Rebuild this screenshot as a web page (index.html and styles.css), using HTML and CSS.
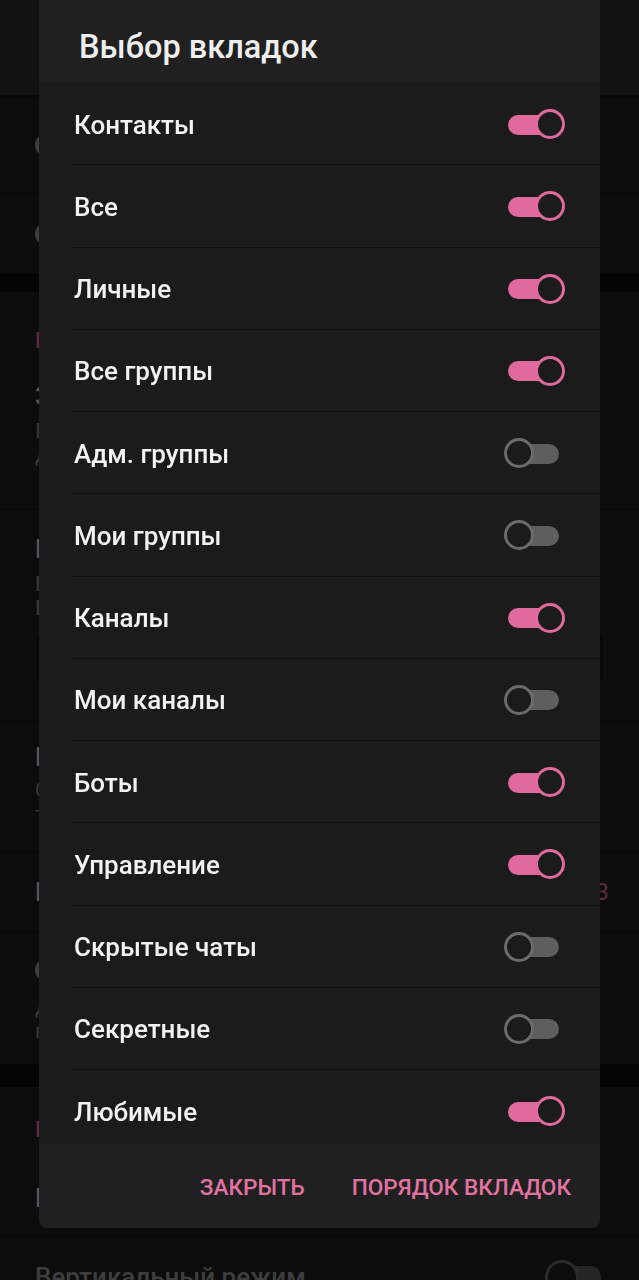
FILE: index.html
```html
<!DOCTYPE html>
<html lang="ru">
<head>
<meta charset="UTF-8">
<meta name="viewport" content="width=device-width, initial-scale=1.0">
<title>Выбор вкладок</title>
<link rel="stylesheet" href="styles.css">
</head>
<body>
<div class="page">
    <div class="toolbar"></div>
    <div class="row icon-row first"><span class="icon"></span><span class="label">Скрывать вкладки</span></div>
    <div class="row icon-row short"><span class="icon"></span><span class="label">Счётчик на вкладках</span></div>
    <div class="band"></div>
    <div class="section">
        <div class="section-title">Вкладки</div>
        <div class="row block-a">
            <div class="label">Значок на вкладках</div>
            <div class="sub">Показывать количество непрочитанных</div>
            <div class="sub">Для всех вкладок</div>
        </div>
        <div class="row block-b">
            <div class="label">Название вкладки</div>
            <div class="sub">Нажмите, чтобы изменить</div>
            <div class="sub">Если пусто, будет по умолчанию</div>
            <div class="field"></div>
        </div>
        <div class="row block-c">
            <div class="label">Иконки вкладок</div>
            <div class="sub">Скрыть названия и показывать</div>
            <div class="sub">только иконки</div>
        </div>
        <div class="row block-d">
            <div class="label">Высота вкладок</div>
            <div class="value">3</div>
        </div>
        <div class="row block-e">
            <span class="icon"></span>
            <div class="sub">Длинное нажатие</div>
            <div class="sub">по вкладке</div>
        </div>
    </div>
    <div class="band tall"></div>
    <div class="section">
        <div class="section-title low">Вид</div>
        <div class="row block-f"><div class="label">Нижнее меню</div></div>
        <div class="row block-g">
            <div class="label muted">Вертикальный режим</div>
            <span class="page-switch"></span>
        </div>
    </div>
</div>

<div class="scrim"></div>

<div class="dialog">
    <div class="dialog-title">Выбор вкладок</div>
    <ul class="tab-list">
        <li class="tab-item"><span>Контакты</span><span class="switch on"></span></li>
        <li class="tab-item"><span>Все</span><span class="switch on"></span></li>
        <li class="tab-item"><span>Личные</span><span class="switch on"></span></li>
        <li class="tab-item"><span>Все группы</span><span class="switch on"></span></li>
        <li class="tab-item"><span>Адм. группы</span><span class="switch"></span></li>
        <li class="tab-item"><span>Мои группы</span><span class="switch"></span></li>
        <li class="tab-item"><span>Каналы</span><span class="switch on"></span></li>
        <li class="tab-item"><span>Мои каналы</span><span class="switch"></span></li>
        <li class="tab-item"><span>Боты</span><span class="switch on"></span></li>
        <li class="tab-item"><span>Управление</span><span class="switch on"></span></li>
        <li class="tab-item"><span>Скрытые чаты</span><span class="switch"></span></li>
        <li class="tab-item"><span>Секретные</span><span class="switch"></span></li>
        <li class="tab-item"><span>Любимые</span><span class="switch on"></span></li>
    </ul>
    <div class="dialog-actions">
        <button class="action">Закрыть</button>
        <button class="action">Порядок вкладок</button>
    </div>
</div>
</body>
</html>
```

FILE: styles.css
```css
body {
    margin: 0;
    background: #1e1e1e;
    font-family: Roboto, "Noto Sans", sans-serif;
    overflow: hidden;
}

/* settings page behind the dialog */
.page {
    height: 1280px;
    overflow: hidden;
}
.toolbar {
    height: 95px;
    background: #2f2f2f;
    border-bottom: 2px solid #141414;
}
.row {
    box-sizing: border-box;
    padding-left: 35px;
    padding-right: 34px;
    border-bottom: 1px solid #121212;
    position: relative;
}
.icon-row {
    display: flex;
    align-items: center;
    gap: 30px;
}
.icon-row.first {
    height: 97px;
}
.icon-row.short {
    height: 80px;
}
.icon {
    display: block;
    width: 22px;
    height: 22px;
    border-radius: 50%;
    background: #9a9a9a;
}
.label {
    font-size: 26px;
    font-weight: 500;
    color: #dcdcdc;
}
.label.muted {
    color: #999;
}
.sub {
    font-size: 21px;
    line-height: 24px;
    color: #8c8c8c;
}
.band {
    height: 18px;
    background: #0c0c0c;
}
.band.tall {
    height: 23px;
}
.section-title {
    height: 75px;
    box-sizing: border-box;
    padding: 36px 35px 0;
    font-size: 22px;
    font-weight: 500;
    color: #e0699e;
}
.section-title.low {
    padding-top: 30px;
    height: 72px;
}
.block-a {
    height: 143px;
    padding-top: 14px;
}
.block-a .label {
    margin-bottom: 8px;
}
.block-b {
    height: 212px;
    padding-top: 24px;
}
.block-b .label {
    margin-bottom: 8px;
}
.field {
    height: 46px;
    margin-top: 14px;
    background: #141414;
    border: 1px solid #2a2a2a;
}
.block-c {
    height: 130px;
    padding-top: 20px;
}
.block-c .label {
    margin-bottom: 6px;
}
.block-d {
    height: 80px;
    display: flex;
    align-items: center;
    justify-content: space-between;
}
.value {
    font-size: 24px;
    color: #e0699e;
    margin-right: -4px;
}
.block-e {
    height: 132px;
    padding-top: 27px;
    border-bottom: none;
}
.block-e .icon {
    margin-bottom: 14px;
}
.block-f {
    height: 78px;
    display: flex;
    align-items: center;
}
.block-g {
    height: 80px;
    display: flex;
    align-items: center;
    justify-content: space-between;
    border-bottom: none;
}
.page-switch {
    position: relative;
    width: 50px;
    height: 22px;
    border-radius: 11px;
    background: #5e5e5e;
    margin-right: 4px;
}
.page-switch::after {
    content: "";
    position: absolute;
    top: -6px;
    left: -6px;
    width: 28px;
    height: 28px;
    border-radius: 50%;
    border: 3px solid #6b6b6b;
    background: #1e1e1e;
}

.scrim {
    position: fixed;
    inset: 0;
    background: rgba(0, 0, 0, 0.6);
}

/* dialog */
.dialog {
    position: fixed;
    top: 0;
    left: 39px;
    width: 561px;
    height: 1228px;
    display: flex;
    flex-direction: column;
    background: #1b1b1b;
    border-radius: 0 0 8px 8px;
    overflow: hidden;
}
.dialog-title {
    height: 83px;
    box-sizing: border-box;
    padding: 10px 0 0 40px;
    display: flex;
    align-items: center;
    background: #202020;
    font-size: 32.5px;
    font-weight: 500;
    color: #eeeeee;
}
.tab-list {
    flex: 1;
    margin: 0;
    padding: 0;
    list-style: none;
    overflow: hidden;
}
.tab-item {
    height: 82.25px;
    box-sizing: border-box;
    margin-left: 33px;
    padding: 2px 41px 0 2px;
    display: flex;
    align-items: center;
    justify-content: space-between;
    border-bottom: 1px solid #0f0f0f;
    font-size: 26px;
    font-weight: 500;
    color: #f2f2f2;
}
.switch {
    position: relative;
    width: 51px;
    height: 20px;
    border-radius: 10px;
    background: #5e5e5e;
}
.switch::after {
    content: "";
    position: absolute;
    top: -5.5px;
    left: -4.5px;
    width: 24px;
    height: 24px;
    border-radius: 50%;
    border: 3.5px solid #6b6b6b;
    background: #1b1b1b;
}
.switch.on {
    background: #e0699e;
}
.switch.on::after {
    left: 26.5px;
    border-color: #e0699e;
}
.dialog-actions {
    height: 84px;
    box-sizing: border-box;
    padding: 2px 29px 0 0;
    display: flex;
    justify-content: flex-end;
    align-items: center;
    gap: 47px;
    background: #202020;
}
.action {
    padding: 0;
    border: none;
    background: none;
    font-family: Roboto, sans-serif;
    font-size: 22.6px;
    font-weight: 500;
    text-transform: uppercase;
    color: #e0739f;
    cursor: pointer;
}
```
